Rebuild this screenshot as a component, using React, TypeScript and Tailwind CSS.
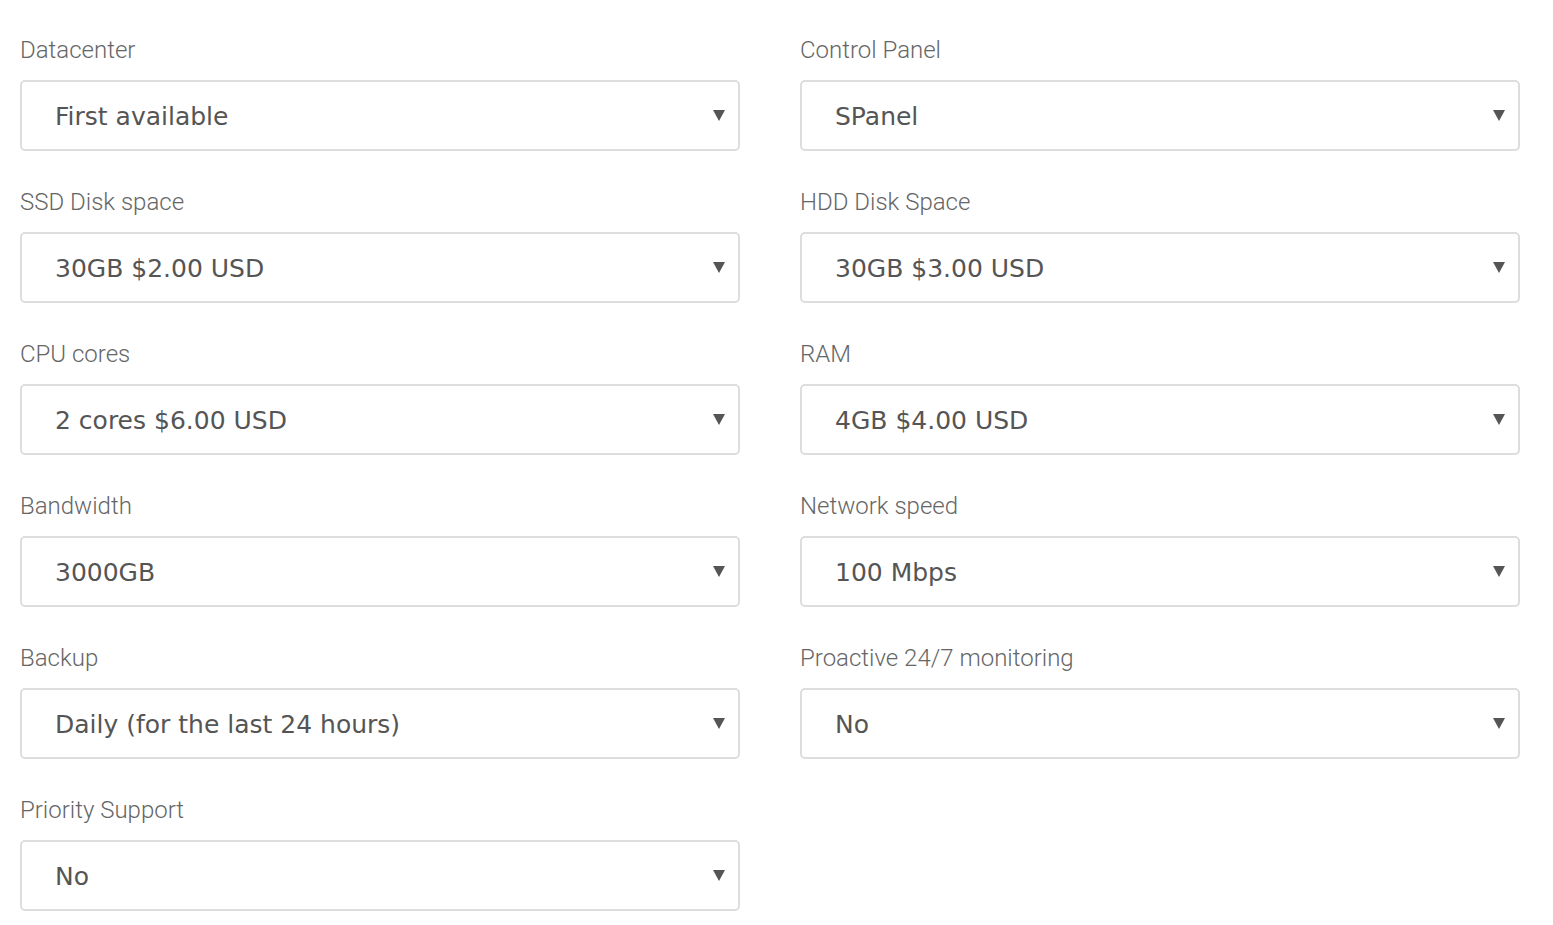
const fields: [string, string][] = [
  ['Datacenter', 'First available'],
  ['Control Panel', 'SPanel'],
  ['SSD Disk space', '30GB $2.00 USD'],
  ['HDD Disk Space', '30GB $3.00 USD'],
  ['CPU cores', '2 cores $6.00 USD'],
  ['RAM', '4GB $4.00 USD'],
  ['Bandwidth', '3000GB'],
  ['Network speed', '100 Mbps'],
  ['Backup', 'Daily (for the last 24 hours)'],
  ['Proactive 24/7 monitoring', 'No'],
  ['Priority Support', 'No'],
];

const Field = ({ label, value }: { label: string; value: string }) => (
  <div className="flex flex-col">
    <div className="text-[24px] leading-[30px] font-light text-[#666] font-[Roboto] mb-[15px]">{label}</div>
    <div className="relative h-[71px] border-2 border-[#ddd] rounded-[5px] bg-white flex items-center pl-[33px]">
      <span className="text-[25px] text-[#555] font-[DejaVu_Sans] pt-[2px]">{value}</span>
      <svg className="absolute right-[13px] top-[27px]" width="12" height="12" viewBox="0 0 12 12">
        <path d="M0 1 L12 1 L6 12 Z" fill="#555" />
      </svg>
    </div>
  </div>
);

const App = () => {
  return (
    <div className="min-h-[925px] bg-white pl-[20px] pt-[35px]">
      <div className="grid grid-cols-[720px_720px] gap-x-[60px] gap-y-[36px]">
        {fields.map(([l, v]) => (
          <Field key={l} label={l} value={v} />
        ))}
      </div>
    </div>
  );
};

export default App;
